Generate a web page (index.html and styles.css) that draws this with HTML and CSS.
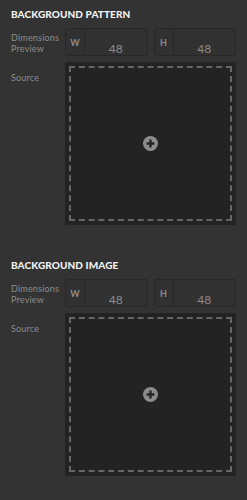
FILE: index.html
```html
<!DOCTYPE html>
<html lang="en">

<head>
  <meta charset="UTF-8">
  <meta name="viewport" content="width=device-width, initial-scale=1.0">
  <title>Background settings</title>
  <link rel="stylesheet" href="styles.css">
</head>

<body>
  <!-- Background pattern -->
  <section class="panel">
    <h2 class="panel-title">Background Pattern</h2>
    <div class="row">
      <div class="row-label">Dimensions Preview</div>
      <div class="dims">
        <div class="dim-field">
          <span class="dim-key">W</span>
          <span class="dim-value">48</span>
        </div>
        <div class="dim-field">
          <span class="dim-key">H</span>
          <span class="dim-value">48</span>
        </div>
      </div>
    </div>
    <div class="row">
      <div class="row-label source-label">Source</div>
      <div class="dropzone">
        <div class="dropzone-inner">
          <svg class="add-icon" width="15" height="15" viewBox="0 0 15 15">
            <circle cx="7.5" cy="7.5" r="7.5" fill="#8c8c8c" />
            <path d="M7.5 3.6v7.8M3.6 7.5h7.8" stroke="#242424" stroke-width="2.4" />
          </svg>
        </div>
      </div>
    </div>
  </section>

  <!-- Background image -->
  <section class="panel">
    <h2 class="panel-title">Background Image</h2>
    <div class="row">
      <div class="row-label">Dimensions Preview</div>
      <div class="dims">
        <div class="dim-field">
          <span class="dim-key">W</span>
          <span class="dim-value">48</span>
        </div>
        <div class="dim-field">
          <span class="dim-key">H</span>
          <span class="dim-value">48</span>
        </div>
      </div>
    </div>
    <div class="row">
      <div class="row-label source-label">Source</div>
      <div class="dropzone">
        <div class="dropzone-inner">
          <svg class="add-icon" width="15" height="15" viewBox="0 0 15 15">
            <circle cx="7.5" cy="7.5" r="7.5" fill="#8c8c8c" />
            <path d="M7.5 3.6v7.8M3.6 7.5h7.8" stroke="#242424" stroke-width="2.4" />
          </svg>
        </div>
      </div>
    </div>
  </section>
</body>

</html>
```

FILE: styles.css
```css
* {
  margin: 0;
  padding: 0;
  box-sizing: border-box;
}

body {
  font-family: 'Lato', 'Open Sans', sans-serif;
  background-color: #333333;
  color: #8c8c8c;
  min-height: 100vh;
  padding-top: 8px;
}

.panel {
  padding: 0 11px;
  margin-bottom: 34px;
}

.panel-title {
  color: #f2f2f2;
  font-size: 10px;
  line-height: 12px;
  font-weight: 900;
  text-transform: uppercase;
  letter-spacing: 0.1px;
  margin-bottom: 8px;
}

.row {
  display: flex;
  margin-bottom: 6px;
}

.row-label {
  width: 54px;
  flex-shrink: 0;
  font-size: 9px;
  line-height: 11px;
  padding-top: 4px;
  letter-spacing: 0.2px;
  color: #8c8c8c;
}

.source-label {
  padding-top: 10px;
}

.dims {
  flex: 1;
  display: flex;
  gap: 6px;
}

.dim-field {
  flex: 1;
  height: 28px;
  display: flex;
  border: 1px solid #272727;
  border-radius: 3px;
  background-color: #313131;
}

.dim-key {
  width: 19px;
  border-right: 1px solid #272727;
  font-size: 9px;
  font-weight: 700;
  line-height: 10px;
  padding-top: 9px;
  text-align: center;
  color: #8c8c8c;
}

.dim-value {
  flex: 1;
  text-align: center;
  font-size: 12px;
  line-height: 12px;
  padding-top: 14px;
  color: #8c8c8c;
}

.dropzone {
  flex: 1;
  height: 163px;
  background-color: #232323;
  padding: 4px;
}

.dropzone-inner {
  height: 100%;
  border: 2px dashed #666666;
  display: flex;
  align-items: center;
  justify-content: center;
}

.add-icon {
  display: block;
}
```
